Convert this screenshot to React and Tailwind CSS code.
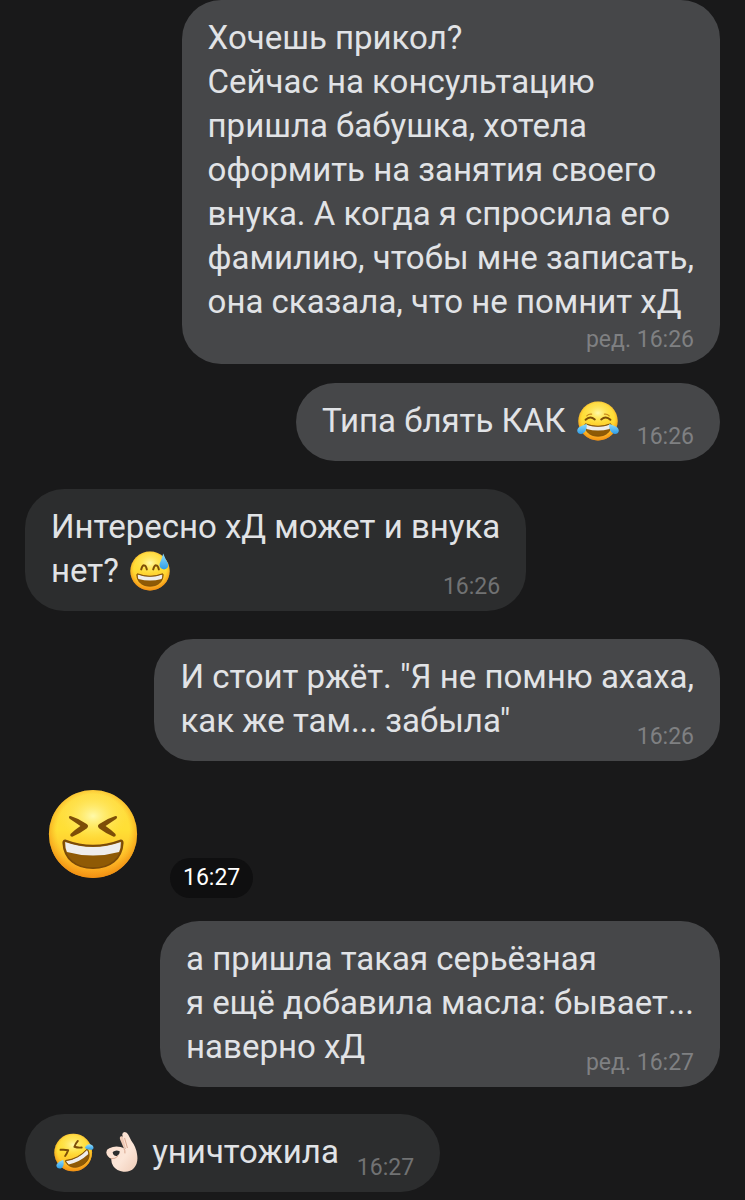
import React from "react";

function Defs() {
  return (
    <svg className="absolute h-0 w-0" aria-hidden="true">
      <defs>
        <linearGradient id="face" x1="0" y1="0" x2="0" y2="1">
          <stop offset="0" stopColor="#ffdc45" />
          <stop offset="0.45" stopColor="#ffdf35" />
          <stop offset="0.75" stopColor="#ffc42c" />
          <stop offset="1" stopColor="#fa9e1c" />
        </linearGradient>
        <radialGradient id="rim" cx="0.5" cy="0.46" r="0.54">
          <stop offset="0.76" stopColor="#f9a51a" stopOpacity="0" />
          <stop offset="1" stopColor="#ee8b10" stopOpacity="0.85" />
        </radialGradient>
        <radialGradient id="shine" cx="0.5" cy="0.5" r="0.5">
          <stop offset="0" stopColor="#fffbb0" stopOpacity="0.95" />
          <stop offset="1" stopColor="#ffe34a" stopOpacity="0" />
        </radialGradient>
        <linearGradient id="tear" x1="0" y1="0" x2="0" y2="1">
          <stop offset="0" stopColor="#8fdcfb" />
          <stop offset="1" stopColor="#2f9ee8" />
        </linearGradient>
        <linearGradient id="skin" x1="0" y1="0" x2="1" y2="1">
          <stop offset="0" stopColor="#fbdccb" />
          <stop offset="0.6" stopColor="#fce6d8" />
          <stop offset="1" stopColor="#efcbb6" />
        </linearGradient>
      </defs>
    </svg>
  );
}

function Ball() {
  return (
    <>
      <circle cx="50" cy="50" r="49" fill="url(#face)" />
      <ellipse cx="50" cy="30" rx="38" ry="29" fill="url(#shine)" />
      <circle cx="50" cy="50" r="49" fill="url(#rim)" />
    </>
  );
}

function Smile() {
  return (
    <>
      <path d="M19 57Q50 69 81 57Q83 57 83 60C82 78 69 88 50 88S18 78 17 60Q17 57 19 57Z" fill="#8f5a05" />
      <path d="M19 59Q50 70 81 59Q81 66 79 70Q50 78 21 70Q19 66 19 59Z" fill="#eeedec" />
      <path d="M19 57Q50 69 81 57Q83 57 83 60C82 78 69 88 50 88S18 78 17 60Q17 57 19 57Z" fill="none" stroke="#7a4a08" strokeWidth="2" strokeLinejoin="round" />
    </>
  );
}

function Squint({ className }) {
  return (
    <svg viewBox="0 0 100 100" className={className} role="img" aria-label="😆">
      <Ball />
      <path d="M25 30Q35 33 43 39Q46 41 43 44Q35 50 27 53Q24 53 25 50Q30 45 36 41Q30 37 24 33Q22 30 25 30Z" fill="#7d4e08" />
      <path d="M75 30Q65 33 57 39Q54 41 57 44Q65 50 73 53Q76 53 75 50Q70 45 64 41Q70 37 76 33Q78 30 75 30Z" fill="#7d4e08" />
      <Smile />
    </svg>
  );
}

function Joy({ className }) {
  return (
    <svg viewBox="0 0 104 100" className={className} role="img" aria-label="😂">
      <g transform="translate(2 0)">
        <Ball />
        <path d="M19 47Q30 36 42 46M58 46Q70 36 81 47" fill="none" stroke="#7d4e08" strokeWidth="5" strokeLinecap="round" />
        <path d="M22 37Q27 32 34 33M66 33Q73 32 78 37" fill="none" stroke="#c98a1c" strokeWidth="3" strokeLinecap="round" />
        <Smile />
        <path d="M22 57Q23 77 11 82Q0 84-2 75Q-2 66 10 62Z" fill="url(#tear)" />
        <path d="M78 57Q77 77 89 82Q100 84 102 75Q102 66 90 62Z" fill="url(#tear)" />
      </g>
    </svg>
  );
}

function Sweat({ className }) {
  return (
    <svg viewBox="0 0 100 100" className={className} role="img" aria-label="😅">
      <Ball />
      <path d="M28 46Q31 35 36 36Q40 36 42 46M58 46Q61 35 66 36Q70 36 72 46" fill="none" stroke="#7d4e08" strokeWidth="5" strokeLinecap="round" />
      <Smile />
      <path d="M83 6Q89 21 95 31Q98 44 85 46Q72 44 74 32Q79 21 83 6Z" fill="url(#tear)" />
    </svg>
  );
}

function Rofl({ className }) {
  return (
    <svg viewBox="0 0 104 100" className={className} role="img" aria-label="🤣">
      <Ball />
      <path d="M17 43Q28 42 37 44Q34 52 29 59M62 20Q56 27 53 35Q62 38 72 37" fill="none" stroke="#7d4e08" strokeWidth="5" strokeLinecap="round" strokeLinejoin="round" />
      <g transform="rotate(-28 50 50) translate(4 2)">
        <Smile />
      </g>
      <path d="M80 38Q85 27 96 29Q105 32 102 40Q97 47 80 38Z" fill="url(#tear)" />
      <path d="M24 69Q28 86 19 91Q9 94 6 85Q6 77 24 69Z" fill="url(#tear)" />
    </svg>
  );
}

function OkHand({ className }) {
  return (
    <svg viewBox="0 0 96 120" className={className} role="img" aria-label="👌🏻">
      <path d="M54 50L42 22Q40 14 46 13Q52 12 56 19L70 50Z" fill="#eec9b5" />
      <path
        d="M60 50L49 9Q48 1 56 0Q63 0 67 8L76 26Q90 44 93 66Q98 92 84 108Q72 121 52 119Q32 117 22 103Q15 93 16 80Q3 74 1 62Q0 53 10 49Q26 40 44 45Q53 48 60 50Z M20 60Q21 73 33 72Q42 68 41 58Q30 52 20 60Z"
        fill="url(#skin)"
        fillRule="evenodd"
      />
      <path d="M56 19L64 47M54 50Q58 55 57 63M16 80Q28 82 36 72" fill="none" stroke="#d9a891" strokeWidth="3" strokeLinecap="round" />
    </svg>
  );
}

function Bubble({ mine, lines, last, stamp, ownRow, className }) {
  const tone = mine ? "self-end bg-[#464749]" : "self-start bg-[#2c2d2e]";
  const stampTone = mine ? "text-[#7f8082]" : "text-[#717273]";
  return (
    <article className={`rounded-[39px] px-[26px] pt-4 pb-3 text-[33px] leading-[44px] text-[#e1e3e6] ${tone} ${className}`}>
      {lines.map((line) => (
        <p key={line}>{line}</p>
      ))}
      <div className={ownRow ? "flex flex-col gap-1" : "flex items-end justify-between gap-[18px]"}>
        <p className={ownRow ? "" : "pb-[6px]"}>{last}</p>
        <time className={`shrink-0 text-[23px] leading-6 whitespace-nowrap ${stampTone} ${ownRow ? "self-end" : ""}`}>{stamp}</time>
      </div>
    </article>
  );
}

export default function App() {
  return (
    <main className="flex min-h-screen flex-col bg-[#19191a] px-[25px] pb-2 font-['Roboto','Noto_Sans',sans-serif]">
      <Defs />
      <Bubble
        mine
        ownRow
        className=""
        lines={[
          "Хочешь прикол?",
          "Сейчас на консультацию",
          "пришла бабушка, хотела",
          "оформить на занятия своего",
          "внука. А когда я спросила его",
          "фамилию, чтобы мне записать,",
        ]}
        last="она сказала, что не помнит хД"
        stamp="ред. 16:26"
      />
      <Bubble
        mine
        className="mt-[19px]"
        lines={[]}
        last={<>Типа блять КАК <Joy className="ml-[3px] inline-block h-10 w-[42px] align-[-9px]" /></>}
        stamp="16:26"
      />
      <Bubble
        className="mt-7"
        lines={["Интересно хД может и внука"]}
        last={<>нет? <Sweat className="ml-[3px] inline-block size-10 align-[-9px]" /></>}
        stamp="16:26"
      />
      <Bubble
        mine
        className="mt-7"
        lines={['И стоит ржёт. "Я не помню ахаха,']}
        last={'как же там... забыла"'}
        stamp="16:26"
      />
      <article className="mt-7 flex items-end gap-8 self-start pl-[23px]">
        <Squint className="mb-[19px] size-[90px]" />
        <time className="rounded-full bg-[#0f0f10] px-[13px] py-2 text-[23px] leading-6 text-white">16:27</time>
      </article>
      <Bubble
        mine
        className="mt-[23px]"
        lines={["а пришла такая серьёзная", "я ещё добавила масла: бывает..."]}
        last="наверно хД"
        stamp="ред. 16:27"
      />
      <Bubble
        className="mt-[27px]"
        lines={[]}
        last={
          <>
            <Rofl className="mr-3 ml-[3px] inline-block h-[39px] w-10 align-[-9px]" />
            <OkHand className="mr-[6px] inline-block h-10 w-8 align-[-9px]" /> уничтожила
          </>
        }
        stamp="16:27"
      />
    </main>
  );
}
